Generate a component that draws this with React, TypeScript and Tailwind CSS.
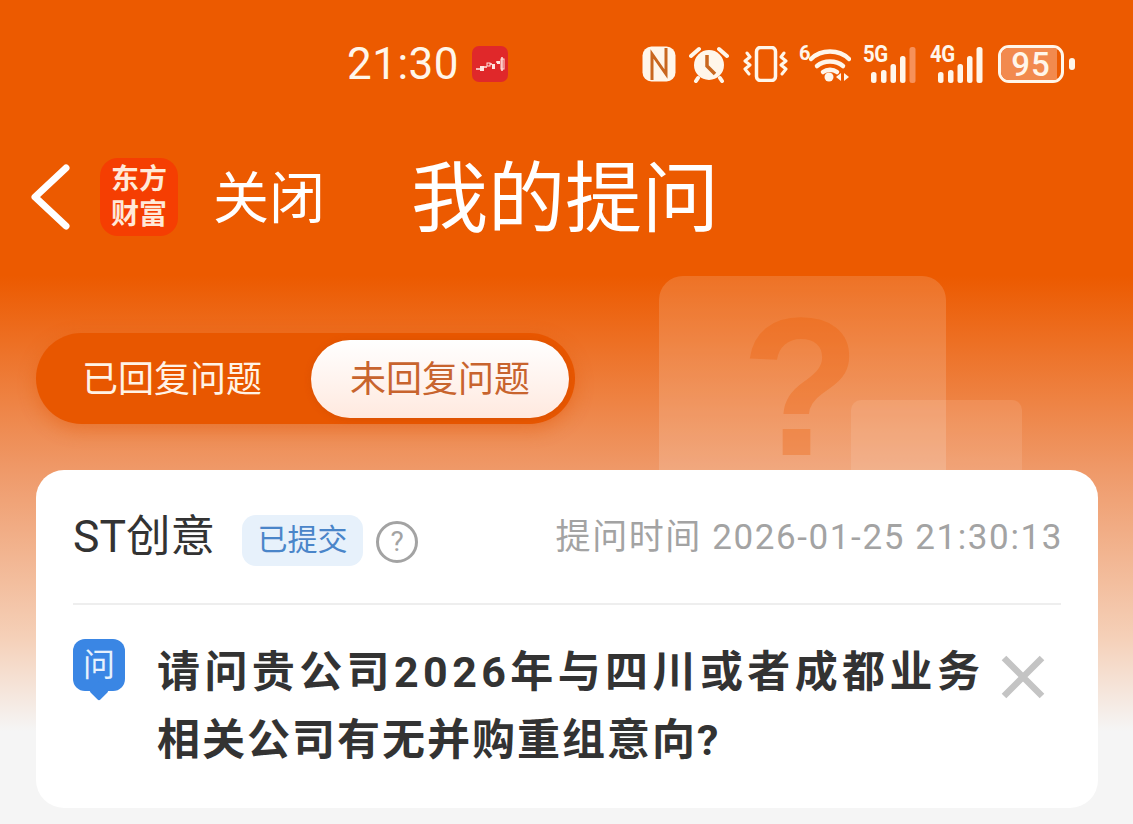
const Nfc = () => (
  <svg width="34" height="36" viewBox="0 0 34 36" fill="none">
    <rect x="0.5" y="0.5" width="33" height="35" rx="9" fill="#fff6ea" />
    <path d="M10 34V8l14 20V2" stroke="#c9671f" strokeWidth="3" />
  </svg>
);

const Alarm = () => (
  <svg width="40" height="37" viewBox="0 0 40 37" fill="none">
    <path d="M2 10l8-7M38 10l-8-7" stroke="#fff6ea" strokeWidth="4" strokeLinecap="round" />
    <path d="M9 32l-2 3M31 32l2 3" stroke="#fff6ea" strokeWidth="4" strokeLinecap="round" />
    <circle cx="20" cy="19" r="15" fill="#fff6ea" />
    <path d="M18 9v11l8 8" stroke="#c9671f" strokeWidth="3.5" />
  </svg>
);

const Vibrate = () => (
  <svg width="45" height="36" viewBox="0 0 45 36" fill="none" stroke="#fff6ea" strokeWidth="3" strokeLinecap="round" strokeLinejoin="round">
    <rect x="13.5" y="1.5" width="19" height="33" rx="4" strokeWidth="3.5" />
    <path d="M4 7l3 4-5 4 5 4-5 4 4 5" />
    <path d="M41 7l-3 4 5 4-5 4 5 4-4 5" />
  </svg>
);

const Wifi = () => (
  <svg width="42" height="36" viewBox="0 0 42 36" fill="none">
    <path d="M2 13C12 3 30 3 40 13" stroke="#fff6ea" strokeWidth="4.5" strokeLinecap="round" />
    <path d="M8 20c7-6 19-6 26 0" stroke="#fff6ea" strokeWidth="4.5" strokeLinecap="round" />
    <path d="M14 26c4-3 10-3 14 0" stroke="#fff6ea" strokeWidth="4.5" strokeLinecap="round" />
    <circle cx="20" cy="31" r="4.5" fill="#fff6ea" />
    <path d="M32 27v8l-5-4zM35 27v8l5-4z" fill="#fff6ea" />
  </svg>
);

const Signal = ({ label, faded }: { label: string; faded?: boolean }) => (
  <div className="relative w-[53px] h-[37px]">
    <svg className="absolute left-0 top-0" width="53" height="37" viewBox="0 0 53 37">
      <rect x="8" y="26" width="5.5" height="11" rx="2.5" fill="#fff6ea" />
      <rect x="18" y="24" width="5.5" height="13" rx="2.5" fill="#fff6ea" />
      <rect x="27.5" y="18" width="5.5" height="19" rx="2.5" fill="#fff6ea" />
      <rect x="37" y="10" width="5.5" height="27" rx="2.5" fill="#fff6ea" />
      <rect x="46.5" y="1" width="6" height="36" rx="2.5" fill={faded ? "#f6915a" : "#fff6ea"} />
    </svg>
    <span className="absolute left-0 top-[-3px] text-[24px] leading-[22px] font-bold text-[#fff6ea] tracking-[-0.5px] scale-x-[0.85] origin-left">
      {label}
    </span>
  </div>
);

const AppBadge = () => (
  <div className="w-[36px] h-[36px] rounded-[7px] bg-[#e0282a] flex items-center justify-center">
    <svg width="30" height="16" viewBox="0 0 30 16" fill="none">
      <path d="M1 13h5M9 11h3M15 8h2M21 6h2M27 1v14" stroke="#ffe5e0" strokeWidth="1.5" />
      <rect x="5" y="10" width="4" height="5" fill="#ffe5e0" />
      <rect x="12" y="7" width="3" height="3" stroke="#ffe5e0" />
      <rect x="17" y="8" width="3" height="5" fill="#ffe5e0" />
      <rect x="22" y="5" width="3" height="3" fill="#ffe5e0" />
      <rect x="26" y="3" width="3" height="10" stroke="#ffe5e0" />
    </svg>
  </div>
);

export default function App() {
  return (
    <div className="w-[1133px] h-[824px] overflow-hidden bg-[#f5f5f5] font-['Roboto','Noto_Sans_CJK_SC',sans-serif]">
      <div className="bg-[#ec5a00]">
        {/* status bar */}
        <div className="h-[128px] flex items-center pl-[347px] text-[#fff6ea]">
          <span className="text-[44px] leading-none tracking-[0.5px] w-[125px]">21:30</span>
          <AppBadge />
          <div className="ml-[134px]"><Nfc /></div>
          <div className="ml-[13px]"><Alarm /></div>
          <div className="ml-[14px]"><Vibrate /></div>
          <span className="ml-[11px] w-[10px] self-start mt-[43px] text-[20px] leading-[20px] font-bold">6</span>
          <Wifi />
          <div className="ml-[12px]"><Signal label="5G" faded /></div>
          <div className="ml-[14px]"><Signal label="4G" /></div>
          <div className="ml-[15px] w-[66px] h-[38px] rounded-[11px] border-[3px] border-[#fff6ea] overflow-hidden relative flex items-center justify-center">
            <div className="absolute left-0 top-0 bottom-0 w-[93%] bg-[#f28a4e]" />
            <span className="relative text-[33px] leading-none font-medium tracking-[1px]">95</span>
          </div>
          <div className="ml-[5px] w-[6px] h-[12px] rounded-full bg-[#fff6ea]" />
        </div>

        {/* nav bar */}
        <div className="h-[148px] pb-[10px] flex items-center pl-[30px] text-white">
          <svg width="42" height="66" viewBox="0 0 42 66" fill="none">
            <path d="M36 4L5 33l31 29" stroke="#fff" strokeWidth="7" strokeLinecap="round" strokeLinejoin="round" />
          </svg>
          <div className="ml-[28px] w-[78px] h-[78px] rounded-[18px] bg-[#f53e02] flex flex-col items-center justify-center font-bold text-[28px] leading-[35px] text-[#ffe9d8]">
            <span>东方</span>
            <span>财富</span>
          </div>
          <span className="ml-[35px] text-[56px] leading-none mt-[4px]">关闭</span>
          <span className="ml-[86px] text-[77px] leading-none font-normal mt-[6px]">我的提问</span>
        </div>
      </div>

      {/* body */}
      <div className="relative h-[548px] bg-[linear-gradient(180deg,#ec5a00_0%,#ef9a6a_36%,#f5d0b8_66%,#f5f5f5_83%)]">
        <div className="absolute left-[659px] top-0 w-[287px] h-[210px] rounded-t-[24px] bg-white/15 flex justify-center">
          <span className="text-[196px] leading-none font-bold font-['Liberation_Sans',sans-serif] text-[#ec5a00]/30 mt-[14px] ml-[-4px]">?</span>
        </div>
        <div className="absolute left-[851px] top-[124px] w-[171px] h-[86px] rounded-t-[10px] bg-white/10" />

        <div className="relative pt-[57px] pl-[36px]">
          <div className="w-[539px] h-[91px] rounded-full bg-[#e85700] flex items-center pl-[46px] pr-[6px] shadow-[0_6px_18px_rgba(226,90,10,0.45)]">
            <span className="text-[36px] leading-none text-[#fff3e6] mt-[3px]">已回复问题</span>
            <div className="ml-auto w-[258px] h-[78px] pt-[3px] rounded-full bg-gradient-to-b from-white to-[#ffe9df] flex items-center justify-center text-[36px] leading-none text-[#c8642e] shadow-[0_1px_6px_rgba(190,70,10,0.35)]">
              未回复问题
            </div>
          </div>

          {/* card */}
          <div className="mt-[46px] w-[1062px] h-[338px] rounded-[28px] bg-white px-[37px]">
            <div className="h-[135px] pt-[7px] border-b-2 border-[#eeeeee] flex items-center w-[988px]">
              <span className="text-[44.5px] leading-none text-[#333333] w-[169px] mt-[-6px]">ST创意</span>
              <span className="w-[121px] h-[51px] rounded-[14px] bg-[#e7f1fb] flex items-center justify-center text-[30px] leading-none text-[#4a85c9]">已提交</span>
              <span className="ml-[13px] w-[42px] h-[42px] rounded-full border-[3px] border-[#a3a3a3] flex items-center justify-center text-[28px] leading-none text-[#a3a3a3] mt-[4px]">?</span>
              <span className="ml-auto text-[35px] leading-none text-[#a3a3a3] tracking-[1.6px] mt-[-6px] mr-[-2px] whitespace-nowrap">提问时间 2026-01-25 21:30:13</span>
            </div>
            <div className="flex items-start mt-[34px]">
              <div className="relative w-[52px] h-[52px] rounded-[12px] bg-[#3a86e4] flex items-center justify-center text-[32px] leading-none text-[#e6f1fd] shrink-0">
                问
                <div className="absolute left-[19px] bottom-[-7px] w-[14px] h-[14px] rotate-45 bg-[#3a86e4] rounded-[2px]" />
              </div>
              <p className="ml-[32px] w-[840px] mt-[-1px] text-[43px] leading-[68px] font-bold text-[#333333] whitespace-nowrap">
                <span className="tracking-[4.4px]">请问贵公司2026年与四川或者成都业务</span>
                <br />
                <span className="tracking-[2px]">相关公司有无并购重组意向?</span>
              </p>
              <svg className="ml-[4px] mt-[16px] shrink-0" width="44" height="44" viewBox="0 0 44 44" fill="none">
                <path d="M3 3l38 38M41 3L3 41" stroke="#c4c4c4" strokeWidth="6.5" />
              </svg>
            </div>
          </div>
        </div>
      </div>
    </div>
  );
}
